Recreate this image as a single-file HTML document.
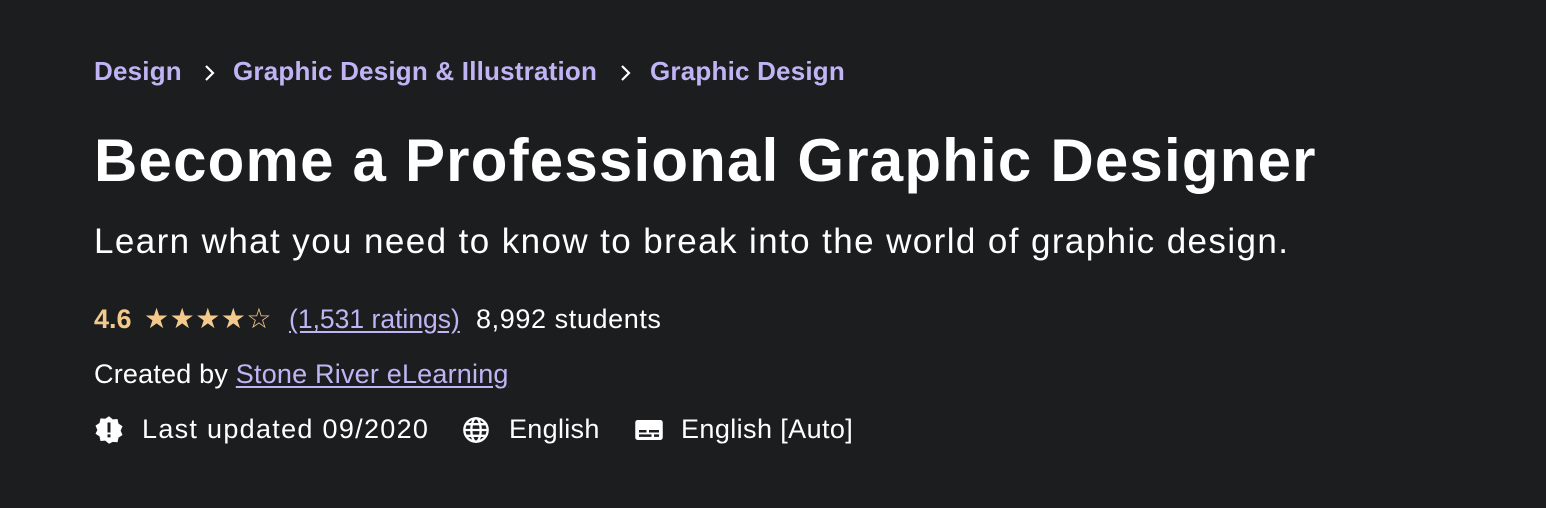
<!DOCTYPE html>
<html><head><style>
body{margin:0;background:#1c1d1f;width:1546px;height:508px;overflow:hidden;font-family:"Liberation Sans",sans-serif;color:#fff;position:relative}
.a{position:absolute;white-space:nowrap}
.bc{top:56px;font-size:26px;font-weight:bold;color:#c0b4f5;letter-spacing:0.2px}
h1{margin:0;left:94px;top:126px;font-size:60px;font-weight:bold;letter-spacing:1.2px}
.sub{left:94px;top:222px;font-size:35px;letter-spacing:1.4px}
.t27{font-size:27px}
.n{color:#f3ca8c;font-weight:bold}
.st{color:#f3ca8c;font-size:28px;letter-spacing:0.5px}
a{color:#c0b4f5;text-decoration:underline;text-underline-offset:3px}
</style></head><body>
<div class="a bc" style="left:94px">Design</div>
<svg class="a" style="left:203px;top:64px" width="12" height="18" viewBox="0 0 12 18"><path d="M3 2l7 7-7 7" fill="none" stroke="#fff" stroke-width="2.2"/></svg>
<div class="a bc" style="left:233px">Graphic Design &amp; Illustration</div>
<svg class="a" style="left:619px;top:64px" width="12" height="18" viewBox="0 0 12 18"><path d="M3 2l7 7-7 7" fill="none" stroke="#fff" stroke-width="2.2"/></svg>
<div class="a bc" style="left:650px">Graphic Design</div>
<h1 class="a">Become a Professional Graphic Designer</h1>
<div class="a sub">Learn what you need to know to break into the world of graphic design.</div>
<div class="a t27 n" style="left:94px;top:304px">4.6</div>
<div class="a st" style="left:144px;top:302px">★★★★☆</div>
<div class="a" style="left:289px;top:304px;font-size:26.5px"><a>(1,531 ratings)</a></div>
<div class="a t27" style="left:476px;top:304px;letter-spacing:0.6px">8,992 students</div>
<div class="a t27" style="left:94px;top:359px;letter-spacing:0.2px">Created by <a>Stone River eLearning</a></div>
<svg class="a" style="left:94px;top:415px" width="30" height="30" viewBox="0 0 24 24"><path fill="#fff" d="M12 1l3 2.5 3.8-.3.8 3.7 3.2 2.1-1.5 3.5 1.5 3.5-3.2 2.1-.8 3.7-3.8-.3L12 23l-3-2.5-3.8.3-.8-3.7-3.2-2.1L2.7 12 1.2 8.5l3.2-2.1.8-3.7 3.8.3z"/><rect x="10.8" y="6" width="2.4" height="8" fill="#1c1d1f"/><rect x="10.8" y="15.5" width="2.4" height="2.4" fill="#1c1d1f"/></svg>
<div class="a t27" style="left:142px;top:414px;letter-spacing:1.3px">Last updated 09/2020</div>
<svg class="a" style="left:462px;top:416px" width="28" height="28" viewBox="0 0 24 24" fill="none" stroke="#fff" stroke-width="2"><circle cx="12" cy="12" r="10"/><ellipse cx="12" cy="12" rx="4" ry="10"/><path d="M2 12h20M4 7h16M4 17h16"/></svg>
<div class="a t27" style="left:509px;top:414px;letter-spacing:0.3px">English</div>
<svg class="a" style="left:634px;top:415px" width="30" height="30" viewBox="0 0 24 24"><rect x="1" y="4" width="22" height="16" rx="2" fill="#fff"/><rect x="4" y="12" width="6" height="2" fill="#1c1d1f"/><rect x="12" y="12" width="8" height="2" fill="#1c1d1f"/><rect x="4" y="15.5" width="10" height="2" fill="#1c1d1f"/><rect x="16" y="15.5" width="4" height="2" fill="#1c1d1f"/></svg>
<div class="a t27" style="left:681px;top:414px;letter-spacing:0.4px">English [Auto]</div>
</body></html>
